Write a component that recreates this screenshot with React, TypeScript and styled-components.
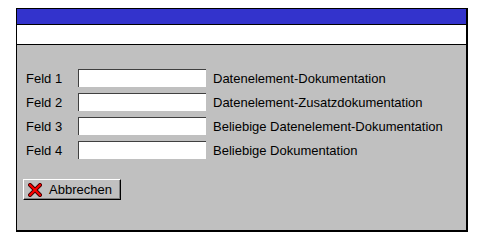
import styled, { createGlobalStyle } from 'styled-components';

const GlobalStyle = createGlobalStyle`
  html, body {
    margin: 0;
    padding: 0;
    background: #ffffff;
  }
  body {
    font-family: 'Liberation Sans', Arial, sans-serif;
    font-size: 13px;
    color: #000000;
  }
`;

const fields = [
  { label: 'Feld 1', doc: 'Datenelement-Dokumentation' },
  { label: 'Feld 2', doc: 'Datenelement-Zusatzdokumentation' },
  { label: 'Feld 3', doc: 'Beliebige Datenelement-Dokumentation' },
  { label: 'Feld 4', doc: 'Beliebige Dokumentation' },
];

const App = () => {
  return (
    <>
      <GlobalStyle />
      <Page>
        <Window>
          <TitleBar />
          <MenuStrip />
          <Body>
            <FieldList>
              {fields.map((f) => (
                <FieldRow key={f.label}>
                  <Label>{f.label}</Label>
                  <Input />
                  <Doc>{f.doc}</Doc>
                </FieldRow>
              ))}
            </FieldList>
            <CancelButton>
              <CrossIcon />
              Abbrechen
            </CancelButton>
          </Body>
        </Window>
      </Page>
    </>
  );
};

const CrossIcon = () => (
  <svg width="14" height="14" viewBox="0 0 14 14">
    <g strokeLinecap="square">
      <path d="M2 2 L12 12 M12 2 L2 12" stroke="#400000" strokeWidth="4" />
      <path d="M2 2 L12 12 M12 2 L2 12" stroke="#ff0000" strokeWidth="2" />
    </g>
  </svg>
);

export default App;

const Page = styled.div`
  padding: 8px 0 0 16px;
`;

const Window = styled.div`
  width: 449px;
  height: 221px;
  border-top: 1px solid #000;
  border-left: 1px solid #000;
  border-right: 2px solid #000;
  border-bottom: 2px solid #000;
  background: #c0c0c0;
  display: flex;
  flex-direction: column;
`;

const TitleBar = styled.div`
  height: 15px;
  background: #3333cc;
  border-bottom: 1px solid #000;
`;

const MenuStrip = styled.div`
  height: 19px;
  background: #ffffff;
  border-bottom: 1px solid #000;
`;

const Body = styled.div`
  flex: 1;
  padding: 24px 0 0 9px;
  display: flex;
  flex-direction: column;
`;

const FieldList = styled.div`
  display: flex;
  flex-direction: column;
  gap: 6px;
`;

const FieldRow = styled.div`
  display: flex;
  align-items: center;
  height: 18px;
`;

const Label = styled.span`
  width: 52px;
`;

const Input = styled.div`
  width: 127px;
  height: 17px;
  background: #ffffff;
  border-top: 1px solid #404040;
  border-left: 1px solid #404040;
  margin-right: 7px;
`;

const Doc = styled.span`
  white-space: nowrap;
`;

const CancelButton = styled.button`
  margin: 20px 0 0 -3px;
  align-self: flex-start;
  width: 98px;
  height: 21px;
  padding: 0 0 0 4px;
  display: flex;
  align-items: center;
  gap: 7px;
  background: #c0c0c0;
  border: 1px solid;
  border-color: #ffffff #000000 #000000 #ffffff;
  box-shadow: inset -1px -1px 0 #808080;
  font-family: 'Liberation Sans', Arial, sans-serif;
  font-size: 13px;
  color: #000;
`;
